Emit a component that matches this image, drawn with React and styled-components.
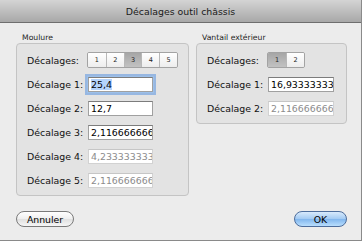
import React from 'react';
import styled, { createGlobalStyle } from 'styled-components';

const Global = createGlobalStyle`
  html, body { margin: 0; padding: 0; background: #ffffff; }
  body { font-family: "DejaVu Sans", Verdana, sans-serif; }
  * { box-sizing: border-box; }
`;

const Window = styled.div`
  width: 362px;
  height: 241px;
  background: #ececec;
  border-right: 1px solid #8a8a8a;
  border-bottom: 1px solid #8a8a8a;
  display: flex;
  flex-direction: column;
`;

const TitleBar = styled.div`
  height: 23px;
  flex: none;
  border-bottom: 1px solid #6e6e6e;
  background: linear-gradient(#d4d4d4, #a8a8a8);
  display: flex;
  align-items: center;
  justify-content: center;
  font-size: 9.4px;
  color: #1a1a1a;
`;

const Body = styled.div`
  flex: 1;
  display: flex;
  flex-direction: column;
  padding: 9px 14px 0 16px;
`;

const Groups = styled.div`
  display: flex;
  gap: 7px;
  align-items: flex-start;
`;

const Group = styled.section`
  width: ${p => p.$w}px;
  display: flex;
  flex-direction: column;
`;

const GroupLabel = styled.div`
  font-size: 7.7px;
  line-height: 11px;
  height: 11px;
  padding-left: 6px;
  color: #222;
`;

const Box = styled.div`
  border: 1px solid #c4c4c4;
  border-radius: 4px;
  background: #e3e3e3;
  padding: 8px 10px 7px 10px;
  display: flex;
  flex-direction: column;
  gap: 8px;
`;

const Row = styled.div`
  display: flex;
  align-items: center;
  height: 16px;
`;

const Label = styled.div`
  width: 60px;
  flex: none;
  font-size: 9.4px;
  color: #111;
  white-space: nowrap;
`;

const Seg = styled.div`
  display: flex;
  height: 16px;
  border: 1px solid #a3a3a3;
  border-radius: 2px;
  overflow: hidden;
`;

const SegItem = styled.div`
  width: 18px;
  display: flex;
  align-items: center;
  justify-content: center;
  font-size: 6.5px;
  color: #222;
  background: ${p => (p.$on ? 'linear-gradient(#a6a6a6, #c2c2c2)' : 'linear-gradient(#ffffff, #ededed)')};
  & + & { border-left: 1px solid #b8b8b8; }
`;

const Field = styled.div`
  width: ${p => p.$w}px;
  height: 15px;
  margin-left: 1px;
  background: #fff;
  border: 1px solid ${p => (p.$disabled ? '#d2d2d2' : '#a0a0a0')};
  border-top-color: ${p => (p.$disabled ? '#c6c6c6' : '#7c7c7c')};
  font-size: 9.4px;
  line-height: 13px;
  padding-left: 2px;
  color: ${p => (p.$disabled ? '#8c8c8c' : '#000')};
  white-space: nowrap;
  overflow: hidden;
  box-shadow: ${p => (p.$focus ? '0 0 0 1px #9cc0ea, 0 0 0 3px rgba(110,160,225,0.65)' : 'none')};
`;

const Selected = styled.span`
  background: #b5d4fc;
`;

const Footer = styled.div`
  margin-top: 15px;
  display: flex;
  justify-content: space-between;
`;

const Button = styled.button`
  width: ${p => p.$w}px;
  height: 16px;
  border-radius: 8px;
  padding: 0;
  font-family: "DejaVu Sans", Verdana, sans-serif;
  font-size: 9.3px;
  color: #000;
  border: 1px solid ${p => (p.$primary ? '#4d6d9c' : '#7a7a7a')};
  background: ${p =>
    p.$primary
      ? 'linear-gradient(#d8eafc, #a4cbf3 48%, #82b7ee 52%, #b9defd)'
      : 'linear-gradient(#ffffff, #efefef 48%, #e0e0e0 52%, #f6f6f6)'};
`;

function Segmented({ count, active }) {
  return (
    <Seg>
      {Array.from({ length: count }, (_, i) => (
        <SegItem key={i} $on={i === active}>{i + 1}</SegItem>
      ))}
    </Seg>
  );
}

export default function App() {
  const left = [
    { v: '25,4', focus: true },
    { v: '12,7' },
    { v: '2,116666666667' },
    { v: '4,233333333333', disabled: true },
    { v: '2,116666666667', disabled: true },
  ];
  const right = [
    { v: '16,933333333333' },
    { v: '2,116666666667', disabled: true },
  ];
  return (
    <>
      <Global />
      <Window>
        <TitleBar>Décalages outil châssis</TitleBar>
        <Body>
          <Groups>
            <Group $w={173}>
              <GroupLabel>Moulure</GroupLabel>
              <Box>
                <Row>
                  <Label>Décalages:</Label>
                  <Segmented count={5} active={2} />
                </Row>
                {left.map((f, i) => (
                  <Row key={i}>
                    <Label>Décalage {i + 1}:</Label>
                    <Field $w={65} $focus={f.focus} $disabled={f.disabled}>
                      {f.focus ? <Selected>{f.v}</Selected> : f.v}
                    </Field>
                  </Row>
                ))}
              </Box>
            </Group>
            <Group $w={152}>
              <GroupLabel>Vantail extérieur</GroupLabel>
              <Box>
                <Row>
                  <Label>Décalages:</Label>
                  <Segmented count={2} active={0} />
                </Row>
                {right.map((f, i) => (
                  <Row key={i}>
                    <Label>Décalage {i + 1}:</Label>
                    <Field $w={66} $disabled={f.disabled}>{f.v}</Field>
                  </Row>
                ))}
              </Box>
            </Group>
          </Groups>
          <Footer>
            <Button $w={58}>Annuler</Button>
            <Button $w={53} $primary>OK</Button>
          </Footer>
        </Body>
      </Window>
    </>
  );
}
